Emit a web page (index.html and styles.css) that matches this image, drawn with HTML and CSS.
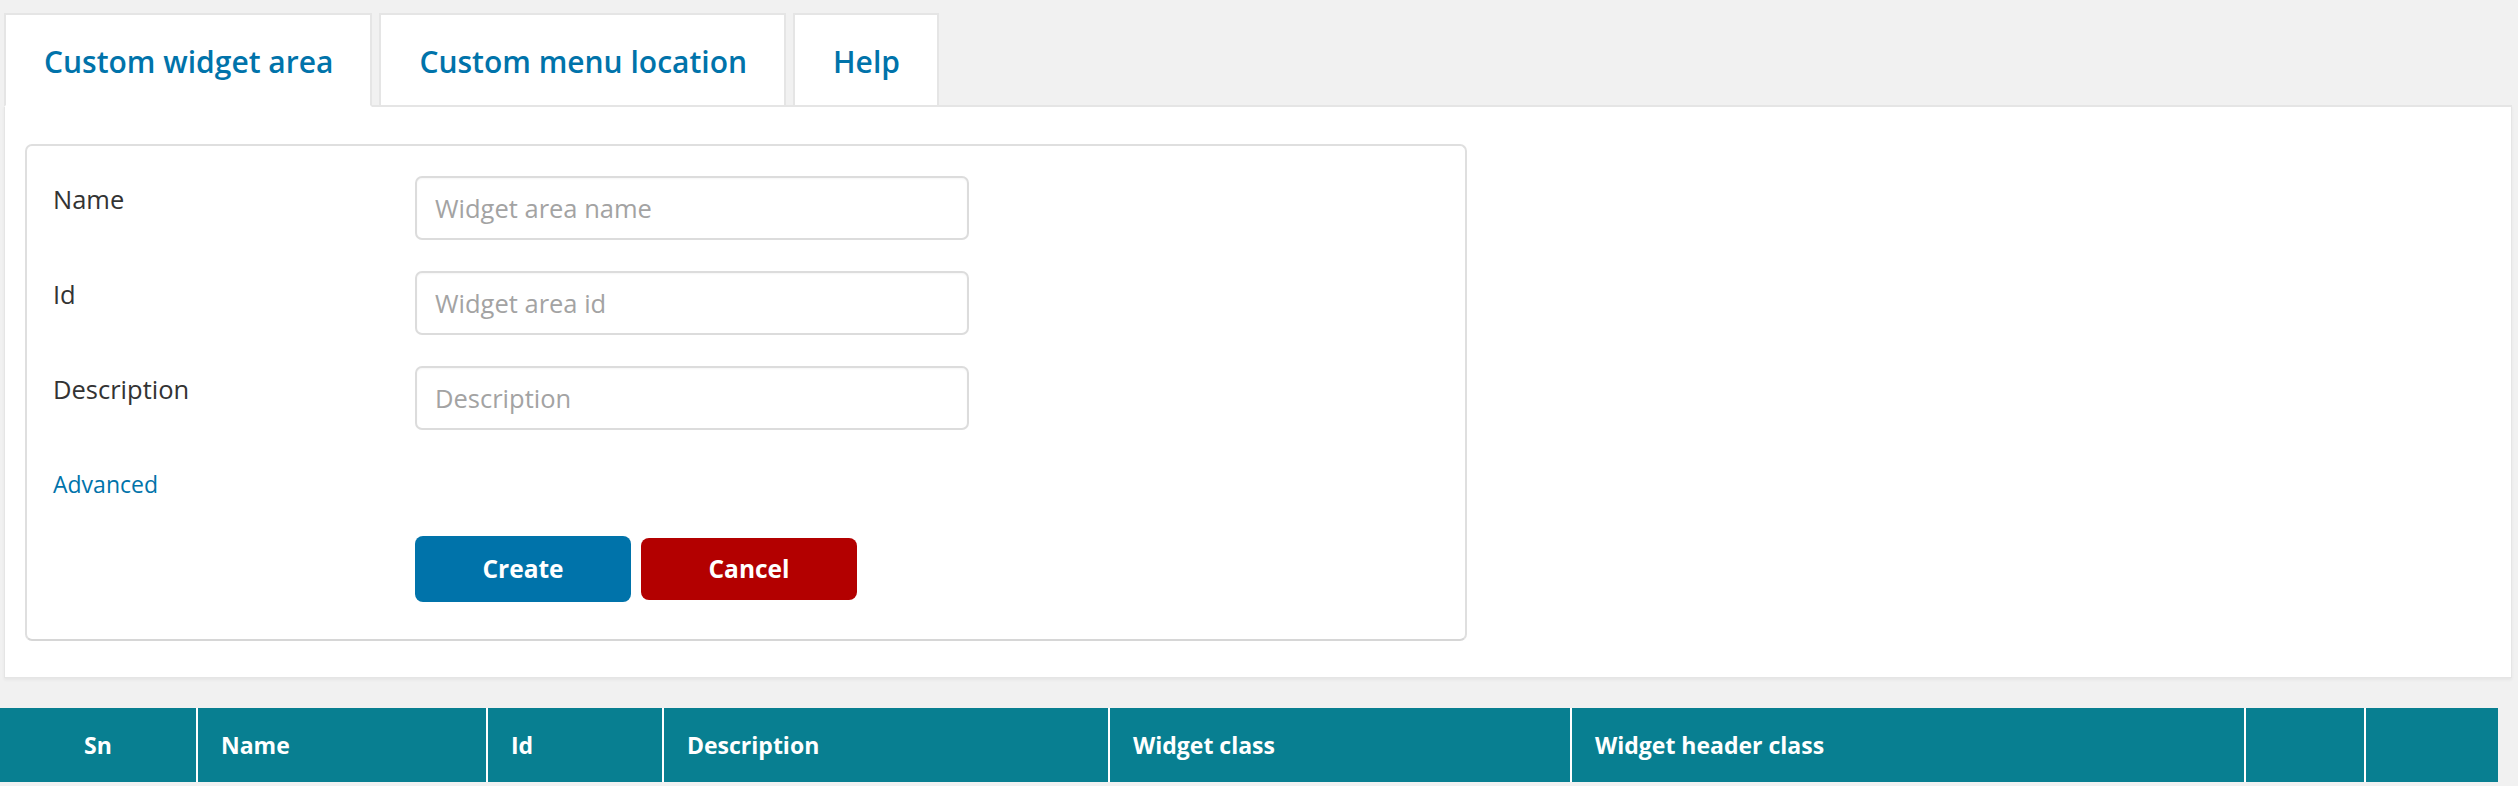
FILE: index.html
```html
<!DOCTYPE html>
<html lang="en">
<head>
<meta charset="utf-8">
<title>Custom widget area</title>
<link rel="stylesheet" href="styles.css">
</head>
<body>
<div class="wrap">
  <nav class="tabs">
    <a class="tab active" href="#">Custom widget area</a>
    <a class="tab" href="#">Custom menu location</a>
    <a class="tab" href="#">Help</a>
  </nav>
  <section class="panel">
    <form class="form-box">
      <div class="fields">
        <div class="field">
          <label class="field-label" for="wa-name">Name</label>
          <input class="field-input" id="wa-name" type="text" placeholder="Widget area name">
        </div>
        <div class="field">
          <label class="field-label" for="wa-id">Id</label>
          <input class="field-input" id="wa-id" type="text" placeholder="Widget area id">
        </div>
        <div class="field">
          <label class="field-label" for="wa-desc">Description</label>
          <input class="field-input" id="wa-desc" type="text" placeholder="Description">
        </div>
      </div>
      <a class="advanced" href="#">Advanced</a>
      <div class="actions">
        <button type="button" class="btn btn-create">Create</button>
        <button type="button" class="btn btn-cancel">Cancel</button>
      </div>
    </form>
  </section>
</div>
<table class="list">
  <thead>
    <tr>
      <th class="c-sn">Sn</th>
      <th class="c-name">Name</th>
      <th class="c-id">Id</th>
      <th class="c-desc">Description</th>
      <th class="c-wclass">Widget class</th>
      <th class="c-hclass">Widget header class</th>
      <th class="c-e1"></th>
      <th class="c-e2"></th>
    </tr>
  </thead>
</table>
</body>
</html>
```

FILE: styles.css
```css
* { box-sizing: border-box; }

html, body {
  margin: 0;
  background: #f1f1f1;
  font-family: "Open Sans", "Liberation Sans", sans-serif;
  color: #32373c;
}

.wrap {
  padding: 13px 6px 0 4px;
}

.tabs {
  display: flex;
  gap: 7px;
  position: relative;
  z-index: 1;
}

.tab {
  display: block;
  height: 94px;
  padding: 25px 37px 0 38px;
  border: 2px solid #e5e5e5;
  background: #fff;
  color: #0073aa;
  font-size: 30px;
  font-weight: 600;
  line-height: 44px;
  text-decoration: none;
  white-space: nowrap;
}

.tab.active {
  border-bottom-color: #fff;
}

.panel {
  margin-top: -2px;
  background: #fff;
  border: 1px solid #e5e5e5;
  border-top: 2px solid #e5e5e5;
  box-shadow: 0 2px 3px rgba(0, 0, 0, 0.05);
  padding: 37px 0 36px 20px;
}

.form-box {
  width: 1442px;
  border: 2px solid #dfdfdf;
  border-bottom-color: #d6d6d6;
  border-radius: 7px;
  padding: 30px 26px 37px 26px;
  display: flex;
  flex-direction: column;
}

.fields {
  display: flex;
  flex-direction: column;
  gap: 31px;
}

.field {
  display: grid;
  grid-template-columns: 362px 554px;
}

.field-label {
  font-size: 25.5px;
  line-height: 36px;
  padding-top: 5px;
  color: #333;
}

.field-input {
  width: 554px;
  height: 64px;
  border: 2px solid #dcdcdc;
  border-radius: 7px;
  padding: 0 18px;
  font-family: "Open Sans", "Liberation Sans", sans-serif;
  font-size: 25.5px;
  color: #32373c;
  background: #fff;
  box-shadow: inset 0 1px 2px rgba(0, 0, 0, 0.04);
  outline: none;
}

.field-input::placeholder {
  color: #a3a3a3;
}

.advanced {
  align-self: flex-start;
  margin-top: 36px;
  font-size: 23px;
  line-height: 36px;
  color: #0073aa;
  text-decoration: none;
}

.actions {
  margin-top: 34px;
  margin-left: 362px;
  display: flex;
  align-items: center;
  gap: 10px;
}

.btn {
  width: 216px;
  border: 0;
  border-radius: 8px;
  color: #fff;
  font-family: "Open Sans", "Liberation Sans", sans-serif;
  font-size: 24.5px;
  font-weight: 700;
  line-height: 38px;
  cursor: pointer;
}

.btn-create {
  height: 66px;
  background: #0073aa;
}

.btn-cancel {
  height: 62px;
  background: #b30000;
}

.list {
  margin-top: 30px;
  width: 2498px;
  table-layout: fixed;
  border-collapse: separate;
  border-spacing: 0;
}

.list th {
  height: 74px;
  padding: 0 0 0 23px;
  background: #087f91;
  color: #fff;
  font-size: 23px;
  font-weight: 700;
  text-align: left;
  border-left: 2px solid #fff;
  white-space: nowrap;
}

.list th.c-sn {
  border-left: 0;
  padding: 0;
  text-align: center;
  width: 196px;
}

.c-name { width: 290px; }
.c-id { width: 176px; }
.c-desc { width: 446px; }
.c-wclass { width: 462px; }
.c-hclass { width: 674px; }
.c-e1 { width: 120px; }
.c-e2 { width: 134px; }
```
